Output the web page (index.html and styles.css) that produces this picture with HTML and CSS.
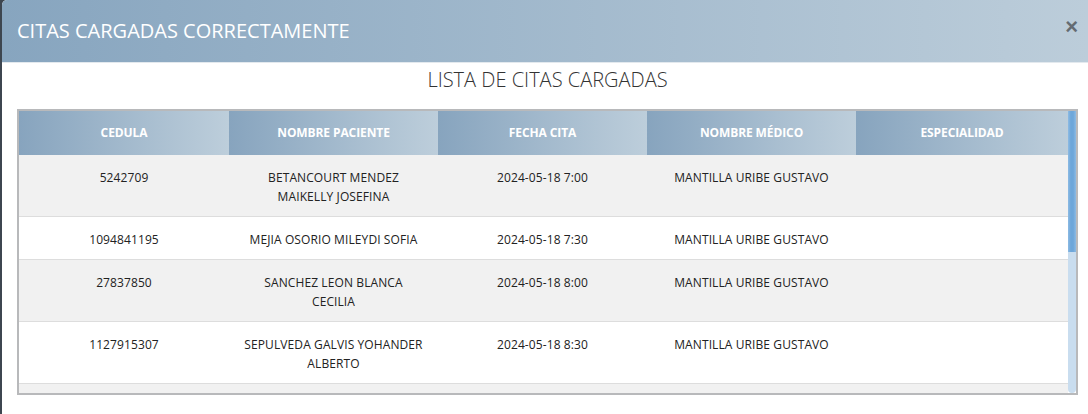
FILE: index.html
```html
<!DOCTYPE html>
<html lang="es">
<head>
<meta charset="utf-8">
<title>Citas cargadas</title>
<link rel="stylesheet" href="styles.css">
</head>
<body>
<div class="modal">
  <div class="modal-header">
    <h4 class="modal-title">CITAS CARGADAS CORRECTAMENTE</h4>
    <button class="close" type="button" aria-label="Cerrar">&times;</button>
  </div>
  <div class="modal-body">
    <h3 class="list-title">LISTA DE CITAS CARGADAS</h3>
    <div class="table-wrap">
      <div class="table-scroll">
        <table class="citas">
          <colgroup>
            <col class="col-cedula">
            <col class="col-std">
            <col class="col-std">
            <col class="col-std">
            <col>
          </colgroup>
          <thead>
            <tr>
              <th>CEDULA</th>
              <th>NOMBRE PACIENTE</th>
              <th>FECHA CITA</th>
              <th>NOMBRE MÉDICO</th>
              <th>ESPECIALIDAD</th>
            </tr>
          </thead>
          <tbody>
            <tr><td>5242709</td><td>BETANCOURT MENDEZ<br>MAIKELLY JOSEFINA</td><td>2024-05-18 7:00</td><td>MANTILLA URIBE GUSTAVO</td><td></td></tr>
            <tr><td>1094841195</td><td>MEJIA OSORIO MILEYDI SOFIA</td><td>2024-05-18 7:30</td><td>MANTILLA URIBE GUSTAVO</td><td></td></tr>
            <tr><td>27837850</td><td>SANCHEZ LEON BLANCA<br>CECILIA</td><td>2024-05-18 8:00</td><td>MANTILLA URIBE GUSTAVO</td><td></td></tr>
            <tr><td>1127915307</td><td>SEPULVEDA GALVIS YOHANDER<br>ALBERTO</td><td>2024-05-18 8:30</td><td>MANTILLA URIBE GUSTAVO</td><td></td></tr>
            <tr class="next-row"><td></td><td></td><td></td><td></td><td></td></tr>
          </tbody>
        </table>
      </div>
      <div class="scrollbar" aria-hidden="true">
        <div class="scrollbar-thumb"></div>
      </div>
    </div>
  </div>
</div>
</body>
</html>
```

FILE: styles.css
```css
* { box-sizing: border-box; }

html, body {
  margin: 0;
  padding: 0;
  height: 100%;
}

body {
  background: #3d4650;
  font-family: "Open Sans", "Noto Sans", "Liberation Sans", sans-serif;
  overflow: hidden;
}

.modal {
  margin-left: 2px;
  height: 100%;
  background: #ffffff;
  border-radius: 5px 0 0 0;
  overflow: hidden;
  display: flex;
  flex-direction: column;
}

.modal-header {
  height: 63px;
  flex: none;
  display: flex;
  align-items: center;
  justify-content: space-between;
  padding: 0 10px 0 15px;
  background: linear-gradient(to right, #87a5bf, #bccdda);
  border-bottom: 1px solid #e3e9ee;
}

.modal-title {
  margin: 0;
  padding-bottom: 2px;
  color: #ffffff;
  font-weight: 400;
  font-size: 20px;
  letter-spacing: 0;
}

.close {
  border: 0;
  background: transparent;
  padding: 0;
  margin-top: -8px;
  color: #555b61;
  font-size: 22px;
  line-height: 1;
  font-family: "Liberation Sans", sans-serif;
  font-weight: 700;
  opacity: 0.85;
}

.modal-body {
  padding: 3px 10px 0 15px;
}

.list-title {
  margin: 0 0 16px;
  text-align: center;
  font-size: 20px;
  font-weight: 300;
  color: #333333;
  line-height: 27px;
}

.table-wrap {
  border: 2px solid #b8b9bb;
  height: 286px;
  display: flex;
  overflow: hidden;
}

.table-scroll {
  flex: 1;
  min-width: 0;
  overflow: hidden;
}

.scrollbar {
  flex: none;
  width: 8px;
  background: #c9ddef;
  border-radius: 0 0 4px 4px;
}

.scrollbar-thumb {
  height: 141px;
  background: linear-gradient(to right, #8dbbe4, #6ea7da 35%, #6ea7da 65%, #8dbbe4);
}

.citas {
  width: 100%;
  border-collapse: collapse;
  table-layout: fixed;
  font-size: 12px;
  color: #222222;
}

.col-cedula { width: 210px; }
.col-std { width: 209px; }

.citas th {
  height: 44px;
  background: linear-gradient(to right, #87a4be, #bdcedb);
  color: #ffffff;
  font-weight: 700;
  font-size: 12px;
  letter-spacing: -0.1px;
  text-align: center;
  vertical-align: middle;
  padding: 0 6px 2px;
}

.citas td {
  text-align: center;
  vertical-align: top;
  padding: 13px 8px 10px;
  line-height: 19px;
  letter-spacing: 0.1px;
  border-bottom: 1px solid #dddddd;
  background: #ffffff;
}

.citas tbody tr:nth-child(odd) td {
  background: #f1f1f1;
}

.citas .next-row td {
  height: 43px;
}
```
